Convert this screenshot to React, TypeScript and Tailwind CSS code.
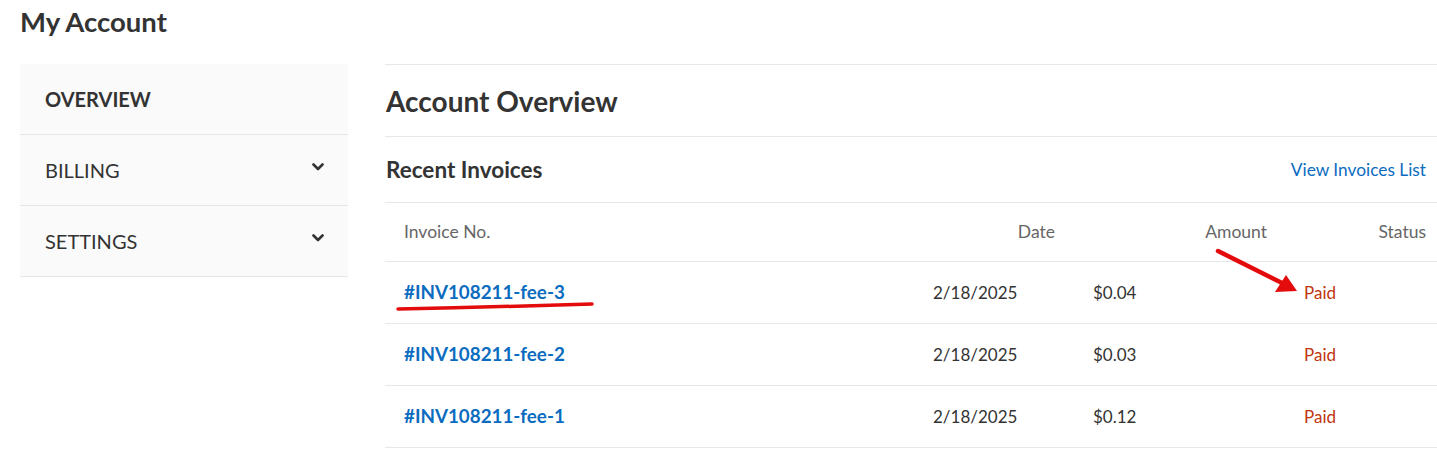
import type { ReactNode } from 'react';

interface Invoice {
  id: string;
  date: string;
  amount: string;
  status: string;
}

const INVOICES: Invoice[] = [
  { id: '#INV108211-fee-3', date: '2/18/2025', amount: '$0.04', status: 'Paid' },
  { id: '#INV108211-fee-2', date: '2/18/2025', amount: '$0.03', status: 'Paid' },
  { id: '#INV108211-fee-1', date: '2/18/2025', amount: '$0.12', status: 'Paid' },
];

const COLS = 'grid grid-cols-[528px_162px_212px_1fr]';

function Chevron() {
  return (
    <svg width="12" height="8" viewBox="0 0 12 8" className="mb-[7px] text-[#333]">
      <polyline points="1.5,1.5 6,6 10.5,1.5" fill="none" stroke="currentColor" strokeWidth="2.6" strokeLinecap="round" strokeLinejoin="round" />
    </svg>
  );
}

function NavItem({ label, active, expandable }: { label: string; active?: boolean; expandable?: boolean }) {
  return (
    <div className="h-[71px] flex items-center justify-between pl-[25px] pr-[24px] border-b border-[#e6e6e6]">
      <span className={`text-[20px] uppercase text-[#333] ${active ? 'font-bold' : ''}`}>{label}</span>
      {expandable && <Chevron />}
    </div>
  );
}

function Row({ children, className = '' }: { children: ReactNode; className?: string }) {
  return <div className={`${COLS} items-center border-b border-[#e8e8e8] ${className}`}>{children}</div>;
}

export default function App() {
  return (
    <div className="min-h-screen bg-white font-['Lato',sans-serif] text-[#333]">
      <h1 className="pl-5 pt-[3px] text-[27.5px] font-bold leading-[38px]">My Account</h1>

      <div className="mt-[23px] flex gap-[37px] pl-5">
        {/* side menu */}
        <nav className="w-[328px] shrink-0 self-start bg-[#fafafa]">
          <NavItem label="Overview" active />
          <NavItem label="Billing" expandable />
          <NavItem label="Settings" expandable />
        </nav>

        {/* overview panel */}
        <section className="flex-1 border-t border-[#e8e8e8]">
          <div className="h-[72px] flex items-center border-b border-[#e8e8e8] pl-px">
            <h2 className="text-[28px] font-bold">Account Overview</h2>
          </div>
          <div className="h-[66px] flex items-center justify-between border-b border-[#e8e8e8] pl-px pr-[11px]">
            <h3 className="text-[22.5px] font-bold">Recent Invoices</h3>
            <a href="#" className="text-[17.3px] text-[#0b6cbf]">View Invoices List</a>
          </div>

          <div className="relative">
            <Row className="h-[59px] text-[17.5px] text-[#666]">
              <span className="pl-[19px]">Invoice No.</span>
              <span className="text-right pr-[20px]">Date</span>
              <span className="text-right pr-[20px]">Amount</span>
              <span className="text-right pr-[11px]">Status</span>
            </Row>
            {INVOICES.map(inv => (
              <Row key={inv.id} className="h-[62px] text-[17px]">
                <a href="#" className="pl-[19px] text-[18.8px] font-bold text-[#0b6cbf]">{inv.id}</a>
                <span className="pl-[20px]">{inv.date}</span>
                <span className="pl-[18px]">{inv.amount}</span>
                <span className="pl-[17px] text-[#c0350f]">{inv.status}</span>
              </Row>
            ))}

            {/* red markup over the first row */}
            <svg className="pointer-events-none absolute left-0 top-0" width="1052" height="120" viewBox="0 0 1052 120">
              <path d="M13 106 Q 110 104 207 101" fill="none" stroke="#e30b0b" strokeWidth="3.5" strokeLinecap="round" />
              <line x1="833" y1="48" x2="905" y2="84" stroke="#e30b0b" strokeWidth="4.5" strokeLinecap="round" />
              <polygon points="912,88 890,89 901,72" fill="#e30b0b" />
            </svg>
          </div>
        </section>
      </div>
    </div>
  );
}
